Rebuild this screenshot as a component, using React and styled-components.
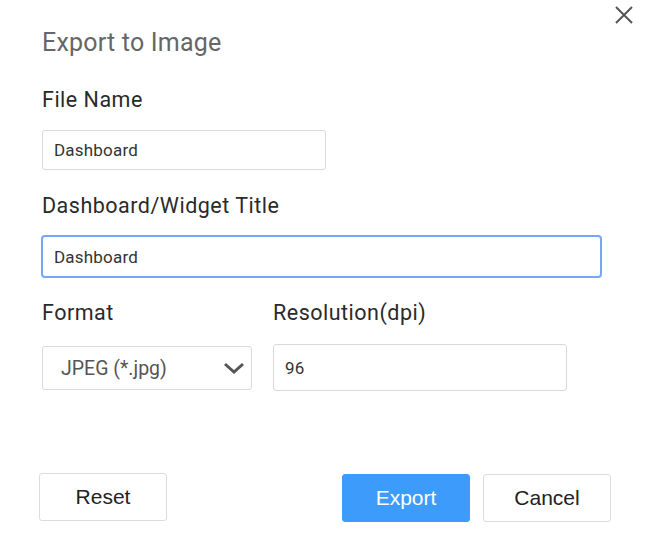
import React from 'react';
import styled, { createGlobalStyle } from 'styled-components';

const GlobalStyle = createGlobalStyle`
    html, body {
        margin: 0;
        padding: 0;
        background: #ffffff;
    }
    * {
        box-sizing: border-box;
    }
`

const Dialog = styled.div`
    position: relative;
    width: 645px;
    height: 551px;
    padding: 29px 34px 0 42px;
    background: #ffffff;
    font-family: Roboto, 'Noto Sans', sans-serif;
    display: flex;
    flex-direction: column;
`

const CloseButton = styled.button`
    position: absolute;
    top: 5px;
    right: 11px;
    width: 20px;
    height: 20px;
    padding: 0;
    border: none;
    background: transparent;
    cursor: pointer;
    display: flex;
    align-items: center;
    justify-content: center;
`

const Title = styled.h2`
    margin: 0 0 31px;
    font-size: 25px;
    line-height: 28px;
    font-weight: 400;
    letter-spacing: 0.2px;
    color: #666666;
`

const Field = styled.div`
    display: flex;
    flex-direction: column;
    margin-bottom: 24px;
`

const Label = styled.label`
    font-size: 21.5px;
    line-height: 24px;
    letter-spacing: 0.5px;
    color: #2a2a2a;
    margin-bottom: ${p => p.$gap || 18}px;
`

const TextInput = styled.input`
    width: ${p => p.$width}px;
    height: ${p => p.$height || 40}px;
    padding: 0 11px;
    border: 1px solid ${p => (p.$focused ? '#73a6f6' : '#d9d9d9')};
    box-shadow: ${p => (p.$focused ? '0 0 0 1px #73a6f6' : 'none')};
    border-radius: 3px;
    font-family: Roboto, 'Noto Sans', sans-serif;
    font-size: 17px;
    letter-spacing: 0.2px;
    color: #333333;
    outline: none;
    background: #ffffff;
`

const Row = styled.div`
    display: flex;
    gap: 21px;
`

const Column = styled.div`
    display: flex;
    flex-direction: column;
`

const SelectBox = styled.div`
    width: 210px;
    height: 44px;
    padding: 0 6px 0 18px;
    border: 1px solid #d9d9d9;
    border-radius: 3px;
    display: flex;
    align-items: center;
    justify-content: space-between;
    font-size: 19.5px;
    color: #555555;
    cursor: pointer;
`

const Footer = styled.div`
    margin: 82px 0 0 -3px;
    display: flex;
    justify-content: space-between;
    align-items: flex-start;
`

const ButtonGroup = styled.div`
    display: flex;
    gap: 13px;
    margin-top: 1px;
`

const Button = styled.button`
    width: 128px;
    height: 48px;
    border-radius: 3px;
    border: 1px solid ${p => (p.$primary ? '#3d9bfc' : '#dcdcdc')};
    background: ${p => (p.$primary ? '#3d9bfc' : '#ffffff')};
    color: ${p => (p.$primary ? '#ffffff' : '#222222')};
    font-family: 'Liberation Sans', Arial, sans-serif;
    font-size: 21px;
    cursor: pointer;
    padding: 0;
`

const CloseIcon = () => (
    <svg width="18" height="18" viewBox="0 0 18 18">
        <path d="M1 1L17 17M17 1L1 17" stroke="#555555" strokeWidth="2" fill="none"/>
    </svg>
)

const ChevronIcon = () => (
    <svg width="22" height="12" viewBox="0 0 22 12">
        <polyline points="2,2 11,10 20,2" stroke="#555555" strokeWidth="3" fill="none" strokeLinejoin="miter"/>
    </svg>
)

export default function App() {
    return (
        <>
            <GlobalStyle/>
            <Dialog>
                <CloseButton aria-label="close"><CloseIcon/></CloseButton>
                <Title>Export to Image</Title>
                <Field>
                    <Label>File Name</Label>
                    <TextInput $width={284} defaultValue="Dashboard"/>
                </Field>
                <Field>
                    <Label>Dashboard/Widget Title</Label>
                    <TextInput $width={559} $height={41} $focused defaultValue="Dashboard"/>
                </Field>
                <Row>
                    <Column>
                        <Label $gap={21}>Format</Label>
                        <SelectBox>
                            <span>JPEG (*.jpg)</span>
                            <ChevronIcon/>
                        </SelectBox>
                    </Column>
                    <Column>
                        <Label $gap={19}>Resolution(dpi)</Label>
                        <TextInput $width={294} $height={47} defaultValue="96"/>
                    </Column>
                </Row>
                <Footer>
                    <Button>Reset</Button>
                    <ButtonGroup>
                        <Button $primary>Export</Button>
                        <Button>Cancel</Button>
                    </ButtonGroup>
                </Footer>
            </Dialog>
        </>
    );
}
